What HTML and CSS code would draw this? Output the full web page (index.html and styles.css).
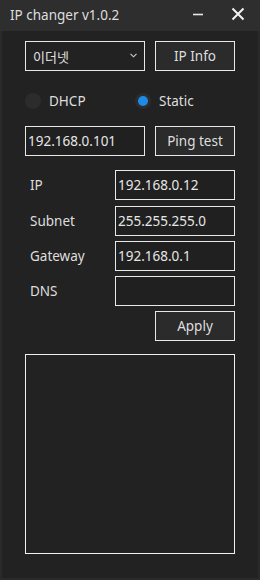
FILE: index.html
```html
<!DOCTYPE html>
<html lang="ko">
<head>
    <meta charset="UTF-8">
    <meta name="viewport" content="width=device-width, initial-scale=1.0">
    <title>IP changer v1.0.2</title>
    <link rel="stylesheet" href="styles.css">
</head>
<body>
    <div class="window">
        <div class="titlebar">
            <span class="title">IP changer v1.0.2</span>
            <span class="title-btn minimize">
                <svg width="12" height="12" viewBox="0 0 12 12"><path d="M1 6.5h10" stroke="#e6e6e6" stroke-width="1.6"/></svg>
            </span>
            <span class="title-btn close">
                <svg width="14" height="14" viewBox="0 0 14 14"><path d="M1.5 1.5l11 11M12.5 1.5l-11 11" stroke="#f2f2f2" stroke-width="2"/></svg>
            </span>
        </div>

        <div class="content">
            <div class="row">
                <div class="combo">
                    <span>이더넷</span>
                    <svg class="chevron" width="7" height="5" viewBox="0 0 7 5"><path d="M0.5 0.8l3 3 3-3" stroke="#cfcfcf" stroke-width="1.1" fill="none"/></svg>
                </div>
                <div class="btn">IP Info</div>
            </div>

            <div class="radio-row">
                <label class="radio"><span class="dot"></span>DHCP</label>
                <label class="radio"><span class="dot checked"></span>Static</label>
            </div>

            <div class="row">
                <div class="box wide">192.168.0.101</div>
                <div class="btn">Ping test</div>
            </div>

            <div class="fields">
                <div class="field">
                    <span class="label">IP</span>
                    <div class="box">192.168.0.12</div>
                </div>
                <div class="field">
                    <span class="label">Subnet</span>
                    <div class="box">255.255.255.0</div>
                </div>
                <div class="field">
                    <span class="label">Gateway</span>
                    <div class="box">192.168.0.1</div>
                </div>
                <div class="field">
                    <span class="label">DNS</span>
                    <div class="box"></div>
                </div>
                <div class="apply-row">
                    <div class="btn">Apply</div>
                </div>
            </div>

            <div class="log"></div>
        </div>
    </div>
</body>
</html>
```

FILE: styles.css
```css
body {
    margin: 0;
    padding: 0;
    background-color: #222;
    font-family: "Noto Sans", "Noto Sans CJK KR", sans-serif;
    color: #e0e0e0;
}

.window {
    width: 260px;
    height: 580px;
    box-sizing: border-box;
    background: #222;
    border: 2px solid #2a2a2a;
    border-top: none;
}

.titlebar {
    height: 31px;
    margin: 0 -2px;
    background: #2e2e2e;
    display: flex;
    align-items: center;
    padding-left: 10px;
}

.title {
    flex: 1;
    font-size: 13.5px;
    color: #dedede;
    padding-bottom: 2px;
}

.title-btn {
    display: flex;
    align-items: center;
    justify-content: center;
}

.minimize {
    width: 12px;
    margin-right: 27px;
    margin-bottom: 3px;
}

.close {
    width: 14px;
    margin-right: 15px;
    margin-bottom: 4px;
}

.content {
    padding: 10px 23px 0;
}

.row {
    display: flex;
    gap: 10px;
    height: 30px;
}

.combo,
.box,
.btn {
    box-sizing: border-box;
    height: 30px;
    border: 1px solid #e8e8e8;
    display: flex;
    align-items: center;
}

.combo {
    width: 120px;
    padding: 0 6px 0 7px;
    font-family: "Noto Sans CJK KR", sans-serif;
    font-size: 13px;
    justify-content: space-between;
}

.chevron {
    margin-right: 1px;
    margin-top: -2px;
}

.btn {
    width: 80px;
    justify-content: center;
    background: #2b2b2b;
    font-size: 13.5px;
    color: #dedede;
}

.box {
    width: 120px;
    padding: 0 2px;
    font-size: 13.5px;
    color: #e6e6e6;
    background: #202020;
}

.radio-row {
    display: grid;
    grid-template-columns: 110px 1fr;
    height: 30px;
    margin: 15px 0 10px;
}

.radio {
    display: flex;
    align-items: center;
    gap: 8px;
    font-size: 13.5px;
    color: #dedede;
}

.dot {
    width: 16px;
    height: 16px;
    border-radius: 50%;
    background: #2c2c2c;
    display: flex;
    align-items: center;
    justify-content: center;
}

.dot.checked::after {
    content: "";
    width: 10px;
    height: 10px;
    border-radius: 50%;
    background: #1e8ae8;
}

.fields {
    margin-top: 14px;
    display: flex;
    flex-direction: column;
    gap: 5px;
}

.field {
    display: flex;
    align-items: center;
}

.field:first-child {
    margin-bottom: 1px;
}

.label {
    width: 90px;
    padding-left: 5px;
    box-sizing: border-box;
    font-size: 13.5px;
    color: #dedede;
}

.apply-row {
    display: flex;
    justify-content: flex-end;
}

.log {
    margin-top: 13px;
    height: 200px;
    border: 1px solid #f0f0f0;
    box-sizing: border-box;
}
```
